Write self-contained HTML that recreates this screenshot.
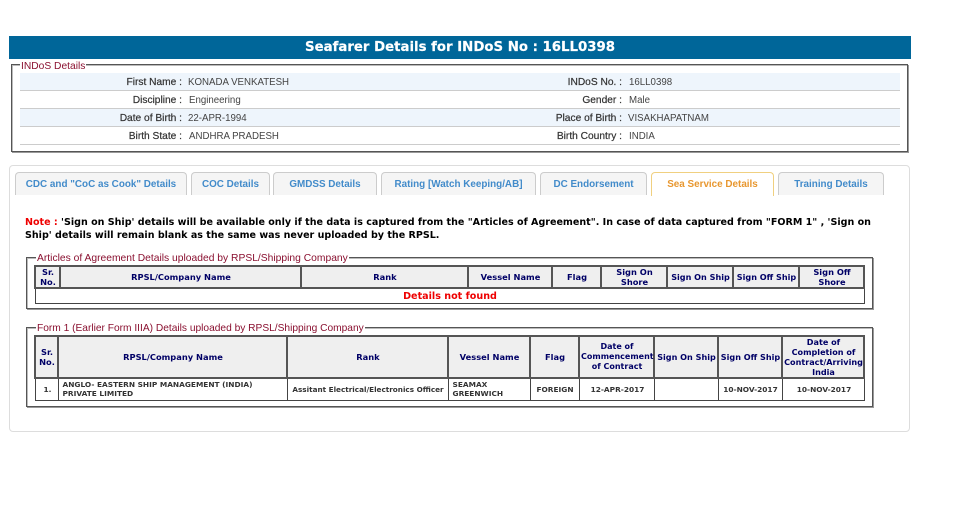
<!DOCTYPE html>
<html><head><meta charset="utf-8"><style>
html,body{margin:0;padding:0;background:#fff;width:970px;height:510px;overflow:hidden}
body{position:relative;font-family:"Liberation Sans",sans-serif}
.a{position:absolute;white-space:nowrap}
.hd{left:9px;top:36px;width:902px;height:23px;background:#006699;color:#fff;font:bold 13.3px/24px "DejaVu Sans",sans-serif;text-align:center;-webkit-text-stroke:.2px #fff}
.fs{position:absolute;box-sizing:border-box;border:1px solid #555;box-shadow:1px 1px 0 #999,inset 1px 1px 0 #bbb}
.lg{position:absolute;background:#fff;color:#8a1030;font-size:10.25px;line-height:12px;padding:0 1px;white-space:nowrap}
.row{position:absolute;left:20px;width:880px;height:17px;border-bottom:1px solid #ccc}
.l{position:absolute;color:#333;font-size:10.2px;line-height:12px;white-space:nowrap;text-align:right;-webkit-text-stroke:.2px #333;margin-top:1px}
.v{position:absolute;color:#444;font-size:9.7px;line-height:12px;white-space:nowrap;margin-top:1px}
.panel{position:absolute;left:9px;top:165px;width:899px;height:265px;border:1px solid #ddd;border-radius:4px}
.tab{position:absolute;top:172px;height:23px;box-sizing:border-box;background:#f5f5f5;border:1px solid #ccc;border-bottom:0;border-radius:4px 4px 0 0;color:#428bca;font:bold 9.9px/23px "Liberation Sans",sans-serif;text-align:center}
.tab.on{background:#fff;border-color:#f0d080;color:#e8972f;height:24px}
.note{left:25px;top:216px;width:860px;font:bold 9.55px/13px "DejaVu Sans",sans-serif;color:#000;white-space:normal}
table{position:absolute;border-collapse:collapse;table-layout:fixed;font-family:"DejaVu Sans",sans-serif}
th{background:#efefef;color:#000066;font-size:8.3px;font-weight:bold;line-height:10px;border:2px solid #555;padding:0 0 0 1px;text-align:center}
td{background:#fff;color:#333;font-size:7.4px;font-weight:bold;line-height:9.5px;border:1px solid #444;padding:0 2px 0 4px;text-align:center}
.nf{color:#e00;font-size:9.6px;line-height:13px;padding:1px 0 0 1px}
</style></head><body>
<div class="a hd">Seafarer Details for INDoS No : 16LL0398</div>

<div class="fs" style="left:11px;top:64px;width:897px;height:88px"></div>
<div class="lg" style="left:20px;top:61px">INDoS Details</div>
<div class="row" style="top:73px;background:#eef5fc"></div>
<div class="row" style="top:91px"></div>
<div class="row" style="top:109px;background:#eef5fc"></div>
<div class="row" style="top:127px"></div>
<div class="l" style="right:788px;top:76px">First Name :</div><div class="v" style="left:188px;top:76px">KONADA VENKATESH</div>
<div class="l" style="right:788px;top:94px">Discipline :</div><div class="v" style="left:189px;top:94px">Engineering</div>
<div class="l" style="right:788px;top:112px">Date of Birth :</div><div class="v" style="left:188px;top:112px">22-APR-1994</div>
<div class="l" style="right:788px;top:130px">Birth State :</div><div class="v" style="left:189px;top:130px">ANDHRA PRADESH</div>
<div class="l" style="right:348px;top:76px">INDoS No. :</div><div class="v" style="left:629px;top:76px">16LL0398</div>
<div class="l" style="right:348px;top:94px">Gender :</div><div class="v" style="left:629px;top:94px">Male</div>
<div class="l" style="right:348px;top:112px">Place of Birth :</div><div class="v" style="left:628px;top:112px">VISAKHAPATNAM</div>
<div class="l" style="right:348px;top:130px">Birth Country :</div><div class="v" style="left:629px;top:130px">INDIA</div>

<div class="panel"></div>
<div class="tab" style="left:15px;width:172px">CDC and "CoC as Cook" Details</div>
<div class="tab" style="left:191px;width:79px">COC Details</div>
<div class="tab" style="left:273px;width:104px">GMDSS Details</div>
<div class="tab" style="left:381px;width:155px">Rating [Watch Keeping/AB]</div>
<div class="tab" style="left:540px;width:107px">DC Endorsement</div>
<div class="tab on" style="left:651px;width:123px">Sea Service Details</div>
<div class="tab" style="left:778px;width:106px">Training Details</div>

<div class="a note"><span style="color:#e00">Note :</span> 'Sign on Ship' details will be available only if the data is captured from the "Articles of Agreement". In case of data captured from "FORM 1" , 'Sign on Ship' details will remain blank as the same was never uploaded by the RPSL.</div>

<div class="fs" style="left:26px;top:257px;width:847px;height:52px"></div>
<div class="lg" style="left:36px;top:253px;font-size:10.3px">Articles of Agreement Details uploaded by RPSL/Shipping Company</div>
<table style="left:34px;top:265px;width:829px">
<colgroup><col style="width:25px"><col style="width:241px"><col style="width:167px"><col style="width:84px"><col style="width:49px"><col style="width:66px"><col style="width:66px"><col style="width:66px"><col style="width:65px"></colgroup>
<tr style="height:22px"><th>Sr.<br>No.</th><th>RPSL/Company Name</th><th>Rank</th><th>Vessel Name</th><th>Flag</th><th>Sign On<br>Shore</th><th style="font-size:8.1px">Sign On Ship</th><th style="font-size:8.1px">Sign Off Ship</th><th>Sign Off<br>Shore</th></tr>
<tr style="height:14px"><td colspan="9" class="nf">Details not found</td></tr>
</table>

<div class="fs" style="left:26px;top:327px;width:847px;height:80px"></div>
<div class="lg" style="left:36px;top:323px;font-size:10.2px">Form 1 (Earlier Form IIIA) Details uploaded by RPSL/Shipping Company</div>
<table style="left:34px;top:335px;width:829px">
<colgroup><col style="width:23px"><col style="width:229px"><col style="width:161px"><col style="width:82px"><col style="width:49px"><col style="width:75px"><col style="width:64px"><col style="width:64px"><col style="width:82px"></colgroup>
<tr style="height:42px"><th>Sr.<br>No.</th><th>RPSL/Company Name</th><th>Rank</th><th>Vessel Name</th><th>Flag</th><th style="font-size:8px">Date of<br>Commencement<br>of Contract</th><th style="font-size:8.1px">Sign On Ship</th><th style="font-size:8.1px">Sign Off Ship</th><th style="font-size:8.1px">Date of<br>Completion of<br>Contract/Arriving<br>India</th></tr>
<tr style="height:22px"><td>1.</td><td style="text-align:left;padding-left:4px">ANGLO- EASTERN SHIP MANAGEMENT (INDIA) PRIVATE LIMITED</td><td style="padding:0 0 0 1px;white-space:nowrap;font-size:7.25px">Assitant Electrical/Electronics Officer</td><td style="text-align:left">SEAMAX GREENWICH</td><td style="padding:0 0 0 1px">FOREIGN</td><td>12-APR-2017</td><td></td><td style="padding:0 0 0 1px">10-NOV-2017</td><td>10-NOV-2017</td></tr>
</table>
</body></html>
